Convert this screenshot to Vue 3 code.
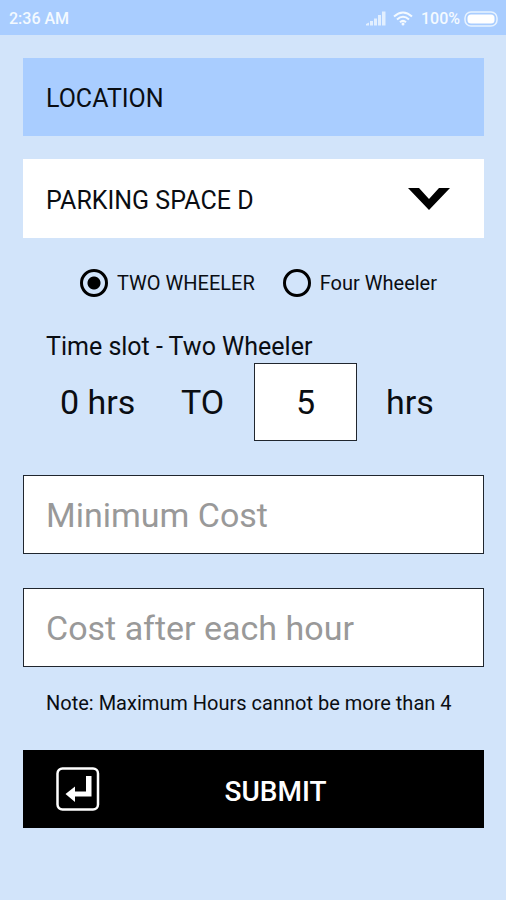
<script setup>
import { ref } from 'vue'

const space = ref('PARKING SPACE D')
const spaces = ['PARKING SPACE A', 'PARKING SPACE B', 'PARKING SPACE C', 'PARKING SPACE D']
const vehicle = ref('two')
const hours = ref('5')
const minimumCost = ref('')
const hourlyCost = ref('')
</script>

<template>
  <div class="screen">
    <header class="status">
      <span>2:36 AM</span>
      <div class="indicators">
        <svg class="signal" viewBox="0 0 20 15" aria-hidden="true">
          <path d="M0 14.500v-1.500l3-1.500v3zM4 14.500v-4.500h3v4.500zM8 14.500v-7h3v7zM12 14.500v-10.500h3v10.500zM16 14.500v-14h3.500v14z" />
        </svg>
        <svg class="wifi" viewBox="0 0 20 15" aria-hidden="true">
          <path d="M1 5.500Q10-2.500 19 5.500M4 8.500Q10 3 16 8.500M7 11.300Q10 8.500 13 11.300" />
          <circle cx="10" cy="13" r="1.500" />
        </svg>
        <span class="percent">100%</span>
        <svg class="battery" viewBox="0 0 34 16" aria-hidden="true">
          <rect class="shell" x="1" y="1" width="32" height="14" rx="6" />
          <rect class="charge" x="3.500" y="3.500" width="27" height="9" rx="3.500" />
        </svg>
      </div>
    </header>

    <form class="form" @submit.prevent>
      <label class="location" for="space">LOCATION</label>
      <div class="picker">
        <select id="space" v-model="space">
          <option v-for="name in spaces" :key="name">{{ name }}</option>
        </select>
        <svg class="chevron" viewBox="0 0 42 22" aria-hidden="true">
          <path d="M0 0h11l10 11 10-11h11l-21 22z" />
        </svg>
      </div>

      <div class="vehicles" role="radiogroup" aria-label="Vehicle">
        <label><input v-model="vehicle" type="radio" name="vehicle" value="two" />TWO WHEELER</label>
        <label><input v-model="vehicle" type="radio" name="vehicle" value="four" />Four Wheeler</label>
      </div>

      <label class="slot-title" for="hours">Time slot - Two Wheeler</label>
      <div class="slot">
        <span>0 hrs</span>
        <span>TO</span>
        <input id="hours" v-model="hours" class="hours" type="text" inputmode="numeric" />
        <span>hrs</span>
      </div>

      <input v-model="minimumCost" class="cost" type="text" placeholder="Minimum Cost" aria-label="Minimum Cost" />
      <input v-model="hourlyCost" class="cost" type="text" placeholder="Cost after each hour" aria-label="Cost after each hour" />
      <p class="note">Note: Maximum Hours cannot be more than 4</p>

      <button class="submit" type="submit">
        <svg class="enter" viewBox="0 0 44 44" aria-hidden="true">
          <rect x="1.500" y="1.500" width="40.500" height="41" rx="5" />
          <path d="M30 9h5.500v20.500H19v5.500L9.500 27l9.500-7.500v5h11z" />
        </svg>
        <span>SUBMIT</span>
      </button>
    </form>
  </div>
</template>

<style>
body {
  background: #d2e4fa;
}
</style>

<style scoped>
.screen,
.screen * {
  box-sizing: border-box;
}

.screen {
  min-height: 100vh;
  color: #0a0d12;
  background: #d2e4fa;
  font-family: Roboto, "Liberation Sans", sans-serif;
  font-size: 25px;
}

input,
select,
button {
  margin: 0;
  border-radius: 0;
  font-family: inherit;
  color: inherit;
}

.status {
  display: flex;
  align-items: center;
  justify-content: space-between;
  height: 35px;
  padding: 2px 8px 0 9px;
  color: #f4faff;
  background: #a9cdff;
  font-size: 16px;
  font-weight: 500;
}

.indicators {
  display: flex;
  align-items: center;
}

.signal {
  width: 20px;
  height: 15px;
  margin-right: 7px;
  fill: #e2efff;
}

.wifi {
  width: 20px;
  height: 15px;
  margin-right: 8px;
  fill: #f4faff;
}

.wifi path {
  fill: none;
  stroke: #f4faff;
  stroke-width: 2;
}

.percent {
  margin-right: 4px;
}

.battery {
  width: 34px;
  height: 16px;
}

.shell {
  fill: none;
  stroke: #e8f3ff;
  stroke-width: 1.5;
}

.charge {
  fill: #fff;
}

.form {
  display: flex;
  flex-direction: column;
  padding: 23px 22px 24px 23px;
}

.location {
  height: 78px;
  margin-bottom: 23px;
  padding: 0 23px;
  line-height: 82px;
  background: #a9cdff;
}

.picker {
  display: grid;
  grid-template-columns: 1fr 42px 34px;
  align-items: center;
  height: 79px;
  background: #fff;
}

.picker select {
  grid-area: 1 / 1 / 2 / 4;
  width: 100%;
  height: 79px;
  padding: 4px 76px 0 23px;
  border: 0;
  background: transparent;
  font-size: 25px;
  appearance: none;
}

.chevron {
  grid-area: 1 / 2;
  width: 42px;
  height: 22px;
  fill: #000;
  pointer-events: none;
}

.vehicles {
  display: flex;
  gap: 28px;
  margin: 31px 0 34px;
  padding-left: 57px;
  font-size: 20px;
}

.vehicles label {
  display: flex;
  align-items: center;
  gap: 9px;
  height: 28px;
}

.vehicles input {
  width: 28px;
  height: 28px;
  border: 3px solid #000;
  border-radius: 50%;
  appearance: none;
}

.vehicles input:checked {
  background: radial-gradient(circle, #000 6px, transparent 7px);
}

.slot-title {
  padding-left: 23px;
  line-height: 32px;
}

.slot {
  display: grid;
  grid-template-columns: 148px 83px 103px 1fr;
  align-items: center;
  margin-bottom: 34px;
  font-size: 34px;
}

.slot span:first-child {
  padding-left: 37px;
}

.slot span:nth-child(2) {
  padding-left: 10px;
}

.slot span:last-child {
  padding-left: 29px;
}

.hours,
.cost {
  width: 100%;
  border: 1px solid #20262e;
  background: #fff;
  font-size: 34px;
}

.hours {
  height: 78px;
  padding: 0;
  text-align: center;
}

.cost {
  height: 79px;
  margin-bottom: 34px;
  padding: 0 22px;
}

.cost::placeholder {
  color: #999;
  opacity: 1;
}

.note {
  margin: -10px 0 35px;
  padding-left: 23px;
  font-size: 20px;
  line-height: 24px;
}

.submit {
  display: grid;
  grid-template-columns: 44px 1fr;
  align-items: center;
  height: 78px;
  padding: 0 33px;
  border: 0;
  color: #fff;
  background: #000;
  font-size: 28px;
  font-weight: 500;
  text-align: center;
}

.submit span {
  padding-top: 4px;
}

.enter {
  width: 44px;
  height: 44px;
}

.enter rect {
  fill: none;
  stroke: #fff;
  stroke-width: 2.5;
}

.enter path {
  fill: #fff;
}
</style>
